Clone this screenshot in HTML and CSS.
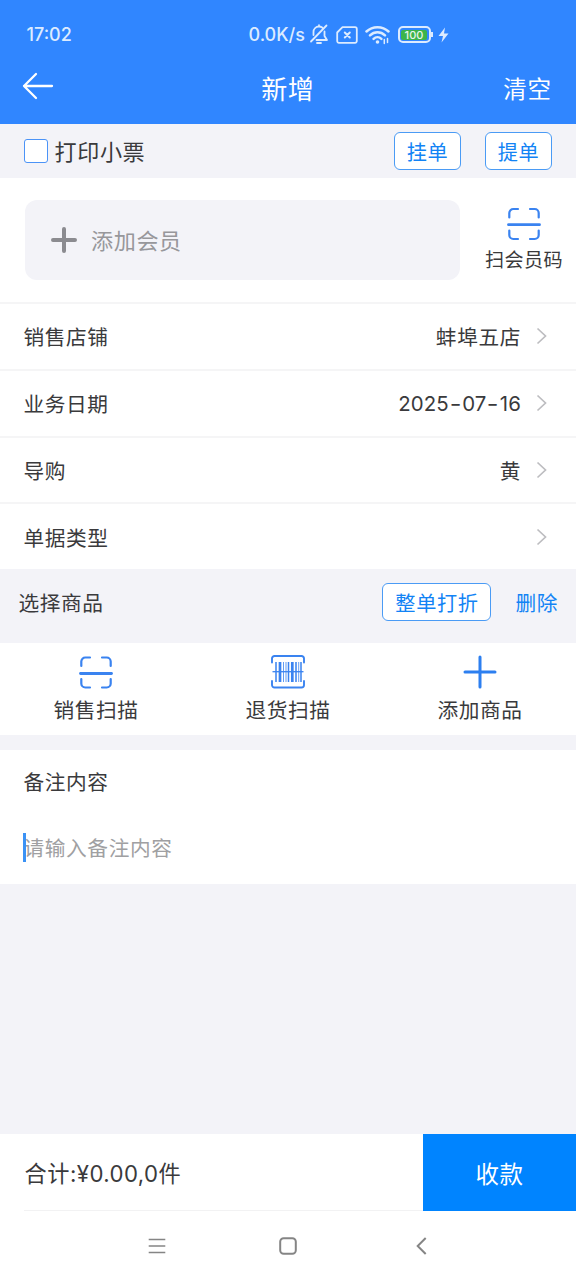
FILE: index.html
```html
<!DOCTYPE html>
<html lang="zh-CN">
<head>
<meta charset="utf-8">
<title>新增</title>
<link rel="stylesheet" href="styles.css">
</head>
<body>
<div class="screen">
  <header class="header">
    <div class="status">
      <span class="clock">17:02</span>
      <div class="status-right">
        <span class="speed">0.0K/s</span>
        <svg class="bell" width="20" height="21" viewBox="0 0 20 21" fill="none" stroke="#dcebff" stroke-width="1.8" stroke-linecap="round" stroke-linejoin="round"><path d="M17.500 1.500 2 17.500M4.500 11V8C4.500 4.800 7 2.500 10 2.500c1.200 0 2.300.4 3.200 1M15.500 7.500V12l2.500 4H7.500M10 1.200v1M8 19h4"/></svg>
        <svg class="sim" width="22" height="18" viewBox="0 0 22 18" fill="none" stroke="#dcebff" stroke-width="1.8" stroke-linejoin="round" stroke-linecap="round"><path d="M6.500 1.200H19a1.800 1.800 0 0 1 1.800 1.800v12a1.800 1.800 0 0 1-1.800 1.800H3A1.800 1.800 0 0 1 1.200 15V6.500z"/><path d="m8.800 6.500 5 5m0-5-5 5" stroke-width="2"/></svg>
        <svg class="wifi" width="26" height="20" viewBox="0 0 26 20" fill="none" stroke="#dcebff" stroke-width="2.500" stroke-linecap="round"><path d="M1.500 6.500c6-5.800 16-5.800 22 0M5 10.300c4.300-4.100 10.700-4.100 15 0M8.600 13.800c2.300-2.100 5.500-2.100 7.800 0"/><circle cx="12.500" cy="17" r="1.800" fill="#dcebff" stroke="none"/><path d="M19.300 14.500v4M22.500 13.500v4" stroke-width="1.500"/></svg>
        <span class="battery"><span class="battery-level">100</span></span>
        <svg class="bolt" width="11" height="16" viewBox="0 0 11 16" fill="#dcebff"><path d="M7 .5.500 9H5l-1.500 6.500L10.500 6.500H6z"/></svg>
      </div>
    </div>
    <div class="titlebar">
      <svg class="back" width="32" height="28" viewBox="0 0 32 28" fill="none" stroke="#fff" stroke-width="2.300" stroke-linecap="round" stroke-linejoin="round"><path d="M14 2 2 14l12 12M2 14h28"/></svg>
      <h1 class="title">新增</h1>
      <span class="clear">清空</span>
    </div>
  </header>

  <div class="toolbar">
    <span class="checkbox"></span>
    <span class="print-label">打印小票</span>
    <span class="btn hold">挂单</span>
    <span class="btn">提单</span>
  </div>

  <section class="member">
    <div class="member-box">
      <svg width="26" height="26" viewBox="0 0 26 26" stroke="#8b8b90" stroke-width="4" stroke-linecap="round"><path d="M13 2v22M2 13h22"/></svg>
      <span class="member-label">添加会员</span>
    </div>
    <div class="member-scan">
      <svg width="34" height="34" viewBox="0 0 34 34" fill="none" stroke="#3a83f0" stroke-width="2.200" stroke-linecap="round"><path d="M2.300 10.500V6a4 4 0 0 1 4-4H11M23 2h4.700a4 4 0 0 1 4 4V10.500M31.700 23.500V28a4 4 0 0 1-4 4H23M11 32H6.300a4 4 0 0 1-4-4V23.500"/><path d="M1.500 17.700h31" stroke-width="2.800"/></svg>
      <span>扫会员码</span>
    </div>
  </section>

  <section class="rows">
    <div class="row"><span>销售店铺</span><span class="value">蚌埠五店</span><svg class="chev" width="11" height="18" viewBox="0 0 11 18"><path d="m1.500 1.500 8 7.500-8 7.500"/></svg></div>
    <div class="row"><span>业务日期</span><span class="value date">2025<span class="dash">-</span>07<span class="dash">-</span>16</span><svg class="chev" width="11" height="18" viewBox="0 0 11 18"><path d="m1.500 1.500 8 7.500-8 7.500"/></svg></div>
    <div class="row"><span>导购</span><span class="value">黄</span><svg class="chev" width="11" height="18" viewBox="0 0 11 18"><path d="m1.500 1.500 8 7.500-8 7.500"/></svg></div>
    <div class="row"><span>单据类型</span><span class="value"></span><svg class="chev" width="11" height="18" viewBox="0 0 11 18"><path d="m1.500 1.500 8 7.500-8 7.500"/></svg></div>
  </section>

  <div class="goods-bar">
    <span class="goods-title">选择商品</span>
    <span class="btn discount">整单打折</span>
    <span class="delete">删除</span>
  </div>

  <section class="actions">
    <div class="action">
      <svg width="34" height="34" viewBox="0 0 34 34" fill="none" stroke="#3a83f0" stroke-width="2.200" stroke-linecap="round"><path d="M2.300 11V6.500a4 4 0 0 1 4-4H11M23 2.500h4.700a4 4 0 0 1 4 4V11M31.700 24v4.500a4 4 0 0 1-4 4H23M11 32.500H6.300a4 4 0 0 1-4-4V24"/><path d="M1.500 18.500h31" stroke-width="2.800"/></svg>
      <span>销售扫描</span>
    </div>
    <div class="action">
      <svg width="34" height="34" viewBox="0 0 34 34" fill="none" stroke="#3a83f0" stroke-width="1.900" stroke-linecap="round"><path d="M1 7.500V3.500A2.500 2.500 0 0 1 3.500 1h27A2.500 2.500 0 0 1 33 3.500v4M1 26v4A2.500 2.500 0 0 0 3.500 32.500h27A2.500 2.500 0 0 0 33 30v-4"/><g stroke-linecap="butt"><path d="M5 7v20M17.500 7v20M25 7v20M30 7v20" stroke-width="1.500"/><path d="M9 7v20M21.300 7v20" stroke-width="2.700"/><path d="M12.500 7v20M15 7v20M27.700 7v20" stroke-width=".8"/><path d="M1.500 16.700h31" stroke-width="1.300"/></g></svg>
      <span>退货扫描</span>
    </div>
    <div class="action">
      <svg width="34" height="34" viewBox="0 0 34 34" stroke="#2c7ff0" stroke-width="3" stroke-linecap="round"><path d="M17 2v30M2 17h30"/></svg>
      <span>添加商品</span>
    </div>
  </section>

  <section class="remark">
    <div class="remark-title">备注内容</div>
    <div class="remark-input"><span class="caret"></span>请输入备注内容</div>
  </section>

  <footer class="footer">
    <div class="total">合计<span class="amount">:¥0.00,0</span>件</div>
    <div class="pay">收款</div>
  </footer>
  <nav class="nav">
    <svg width="18" height="16" viewBox="0 0 18 16" stroke="#858585" stroke-width="1.700"><path d="M.7 1.500h16.600M.7 8h16.600M.7 14.500h16.600"/></svg>
    <svg width="18" height="18" viewBox="0 0 18 18" fill="none" stroke="#858585" stroke-width="2"><rect x="1.200" y="1.200" width="15.600" height="15.600" rx="3.500"/></svg>
    <svg width="11" height="18" viewBox="0 0 11 18" fill="none" stroke="#858585" stroke-width="2"><path d="M9.700 1 1.700 9l8 8"/></svg>
  </nav>
</div>
</body>
</html>
```
FILE: styles.css
```css
* { box-sizing: border-box; }
body {
  margin: 0;
  background: #f3f3f8;
  color: #3a3a3c;
  font-family: "Noto Sans CJK SC", sans-serif;
  font-size: 20.700px;
  letter-spacing: .6px;
  line-height: 30px;
}
svg { display: block; flex: none; }
.screen { width: 576px; height: 1280px; display: flex; flex-direction: column; overflow: hidden; white-space: nowrap; }

.header { height: 124px; background: #3086ff; color: #fff; flex: none; }
.status { height: 52px; padding: 17px 0 0 26.500px; display: flex; align-items: center; color: #dcebff; font-family: Inter, sans-serif; letter-spacing: 0; }
.clock { font-size: 18px; font-weight: 500; width: 222px; }
.status-right { display: flex; align-items: center; }
.speed { font-size: 18px; font-weight: 500; width: 60px; }
.sim { margin-left: 7px; }
.wifi { margin-left: 7px; }
.battery { position: relative; margin-left: 7px; width: 33px; height: 17px; padding: 1.500px; border: 2px solid #dcebff; border-radius: 5px; }
.battery::after { content: ""; position: absolute; right: -4.500px; top: 4px; width: 2px; height: 5px; background: #dcebff; }
.battery-level { display: block; height: 10px; border-radius: 2px; background: #3cb44a; color: #e8f5ee; font-size: 11px; font-weight: 500; line-height: 10px; text-align: center; }
.bolt { margin-left: 7px; }
.titlebar { height: 72px; padding: 0 24.500px 0 22px; display: grid; grid-template-columns: 1fr auto 1fr; align-items: center; }
.back { margin-top: -4px; }
.title { margin: 0; font-size: 26px; font-weight: 400; position: relative; left: 1px; }
.clear { justify-self: end; font-size: 23.500px; }

.toolbar { height: 54px; flex: none; padding: 0 24px; display: flex; align-items: center; }
.checkbox { width: 24px; height: 24px; border: 1.500px solid #4b93f7; border-radius: 3px; background: #fff; }
.print-label { margin-left: 6.500px; font-size: 22.100px; padding-bottom: 2px; }
.btn { width: 67px; height: 38px; border: 1.500px solid #4a9bf5; border-radius: 6px; background: #fff; color: #1283f5; font-size: 20.200px; line-height: 37px; text-align: center; }
.hold { margin: 0 24px 0 auto; }

.member { height: 124px; flex: none; background: #fff; display: flex; align-items: center; padding: 0 12px 0 25px; }
.member-box { width: 435px; height: 80px; border-radius: 12px; background: #f3f3f8; padding-left: 26px; display: flex; align-items: center; gap: 14px; color: #97979b; font-size: 22.100px; }
.member-label { padding-bottom: 2px; }
.member-scan { flex: 1; display: flex; flex-direction: column; align-items: center; padding-left: 24px; font-size: 19.100px; letter-spacing: .4px; gap: 3px; }

.rows { flex: none; background: #fff; }
.row { height: 66.750px; border-top: 2px solid #f5f5f6; padding: 0 29.500px 0 23.500px; display: flex; align-items: center; }
.value { margin-left: auto; margin-right: 14.500px; }
.date { font-family: Inter, sans-serif; font-size: 20.400px; letter-spacing: .1px; padding-top: 2px; }
.dash { display: inline-block; margin: 0 2px; transform: scaleX(1.250); }
.chev { fill: none; stroke: #bdbdc0; stroke-width: 1.700px; }

.goods-bar { height: 74px; flex: none; padding: 0 18px 8px 18.500px; display: flex; align-items: center; }
.discount { width: 109px; margin-left: auto; }
.delete { margin-left: 24px; color: #1283f5; }

.actions { height: 92px; flex: none; background: #fff; display: grid; grid-template-columns: repeat(3, 1fr); }
.action { display: flex; flex-direction: column; align-items: center; padding-top: 12px; gap: 5px; }

.remark { height: 134px; flex: none; margin-top: 15px; padding: 16px 23.500px; background: #fff; }
.remark-input { position: relative; margin-top: 36px; color: #a0a0a2; }
.caret { position: absolute; left: -.5px; top: 1px; width: 3px; height: 29px; background: #3b92f5; }

.footer { height: 77px; flex: none; margin-top: auto; background: #fff; display: flex; align-items: center; padding-left: 24.500px; position: relative; font-size: 22.200px; }
.footer::after { content: ""; position: absolute; left: 24px; right: 153px; bottom: 0; height: 1px; background: #f2f2f3; }
.amount { font-family: Inter, sans-serif; letter-spacing: .4px; }
.pay { width: 153px; height: 77px; margin-left: auto; background: #0084ff; color: #fff; font-size: 23.500px; line-height: 78px; text-align: center; }
.nav { height: 69px; flex: none; background: #fff; display: grid; grid-template-columns: 166px 131px 130px; align-items: center; }
.nav svg { justify-self: end; }
```
